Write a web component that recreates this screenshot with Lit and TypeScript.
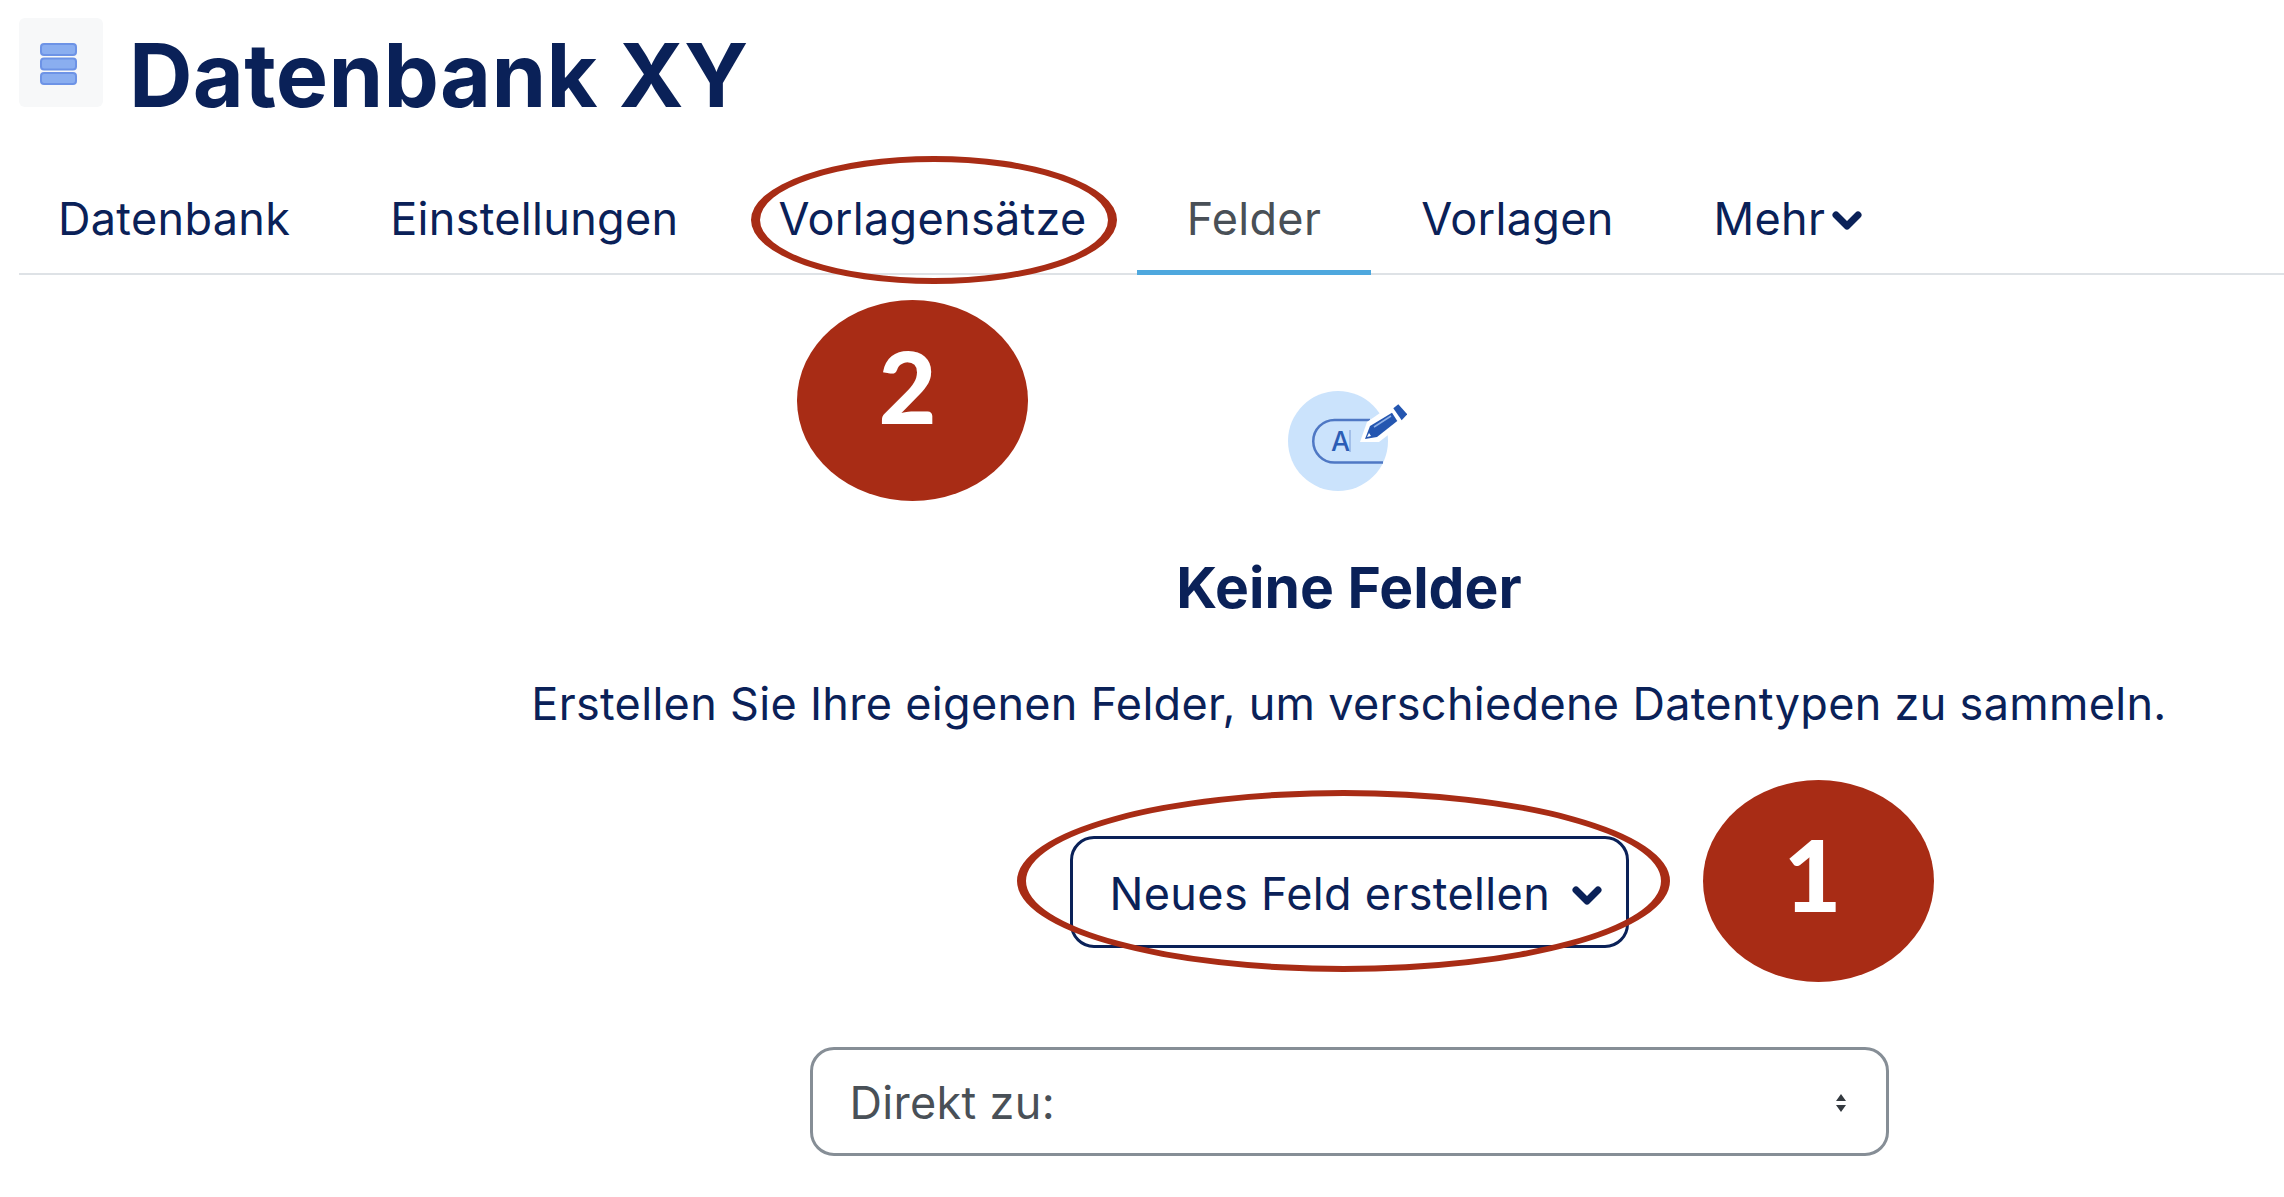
import { LitElement, html, css } from 'lit';
import { customElement } from 'lit/decorators.js';

const chevron = html`<svg class="chev" viewBox="0 0 30 22"><path d="M4 5 L15 16 L26 5" fill="none" stroke="currentColor" stroke-width="7" stroke-linecap="round" stroke-linejoin="round"/></svg>`;

@customElement('app-root')
export class AppRoot extends LitElement {
  static styles = css`
    :host {
      display: block;
      position: relative;
      width: 2284px;
      height: 1197px;
      overflow: hidden;
      background: #fff;
      color: #0a2158;
      font-family: Inter, "Liberation Sans", sans-serif;
    }

    .head {
      display: flex;
      gap: 26px;
      padding: 18px 0 0 19px;
      height: 89px;
    }

    .db-box {
      width: 84px;
      height: 89px;
      flex: none;
      border-radius: 6px;
      background: #f7f8f9;
      display: flex;
      justify-content: center;
      padding-top: 25px;
      box-sizing: border-box;
      padding-right: 6px;
    }

    .db-box svg {
      width: 37px;
      height: 42px;
    }

    .title {
      margin: 13px 0 0;
      font-size: 88px;
      line-height: 89px;
      font-weight: 700;
      letter-spacing: 0.25px;
      white-space: nowrap;
    }

    .tabs {
      display: flex;
      margin: 72px 0 0 19px;
      height: 94px;
      border-bottom: 2px solid #dee2e6;
      font-size: 45px;
      letter-spacing: 0.31px;
    }

    .tab {
      position: relative;
      display: flex;
      align-items: center;
      gap: 7px;
      padding: 0 50px 16px;
      line-height: 53px;
      white-space: nowrap;
    }

    .tab:first-child {
      padding-left: 39px;
    }

    .tab.active {
      color: #495057;
    }

    .tab.active::after {
      content: "";
      position: absolute;
      left: 0;
      right: 0;
      bottom: -2px;
      height: 5px;
      background: #4ea8de;
    }

    .chev {
      width: 30px;
      height: 22px;
      margin-top: 6px;
    }

    .empty {
      display: flex;
      flex-direction: column;
      align-items: center;
      padding: 115px 0 0 414px;
    }

    .field-icon {
      width: 120px;
      height: 102px;
      margin-right: 4px;
    }

    .empty h2 {
      margin: 62px 0 0;
      font-size: 57px;
      line-height: 68px;
      font-weight: 700;
    }

    .empty p {
      margin: 55px 0 0;
      font-size: 45px;
      letter-spacing: 0.31px;
      line-height: 53px;
      white-space: nowrap;
    }

    .add-btn {
      display: flex;
      align-items: center;
      gap: 22px;
      box-sizing: border-box;
      width: 559px;
      height: 112px;
      margin-top: 106px;
      padding: 2px 22px 0 37px;
      border: 3px solid #0a2158;
      border-radius: 24px;
      font-size: 45px;
      letter-spacing: 0.35px;
      white-space: nowrap;
    }

    .jump {
      display: flex;
      align-items: center;
      justify-content: space-between;
      box-sizing: border-box;
      width: 1079px;
      height: 109px;
      margin-top: 99px;
      padding: 2px 37px 0;
      border: 3px solid #868e96;
      border-radius: 24px;
      color: #495057;
      font-size: 45px;
      letter-spacing: 0.31px;
    }

    .jump svg {
      width: 16px;
      height: 20px;
    }

    .ring {
      position: absolute;
      box-sizing: border-box;
      border: 6px solid #a82c15;
      border-left-width: 9px;
      border-right-width: 9px;
      border-radius: 50%;
    }

    .ring.r-tab {
      left: 751px;
      top: 156px;
      width: 366px;
      height: 128px;
    }

    .ring.r-btn {
      left: 1017px;
      top: 790px;
      width: 653px;
      height: 182px;
    }

    .badge {
      position: absolute;
      display: flex;
      align-items: center;
      justify-content: center;
      box-sizing: border-box;
      background: #a82c15;
      border-radius: 50%;
      color: #fff;
      font-family: Lato, "Noto Sans", sans-serif;
      font-weight: 900;
      font-size: 100px;
      width: 231px;
      height: 202px;
    }

    .badge.b1 {
      left: 1703px;
      top: 780px;
      padding: 0 12px 16px 0;
    }

    .badge.b2 {
      left: 797px;
      top: 300px;
      height: 201px;
      padding: 0 10px 32px 0;
    }
  `;

  render() {
    return html`
      <div class="head">
        <div class="db-box">
          <svg viewBox="0 0 37 42">
            <g fill="#8aaef0" stroke="#6d93e6" stroke-width="2">
              <rect x="1" y="1" width="35" height="11" rx="3"></rect>
              <rect x="1" y="15.5" width="35" height="11" rx="3"></rect>
              <rect x="1" y="30" width="35" height="11" rx="3"></rect>
            </g>
          </svg>
        </div>
        <h1 class="title">Datenbank XY</h1>
      </div>
      <nav class="tabs">
        <div class="tab">Datenbank</div>
        <div class="tab">Einstellungen</div>
        <div class="tab">Vorlagensätze</div>
        <div class="tab active">Felder</div>
        <div class="tab">Vorlagen</div>
        <div class="tab">Mehr ${chevron}</div>
      </nav>
      <main class="empty">
        <svg class="field-icon" viewBox="0 0 120 102">
          <circle cx="51" cy="51" r="50" fill="#cbe3fc"></circle>
          <path d="M83 30 H47.500 a21.250 21.250 0 0 0 0 42.500 H96" fill="none" stroke="#4f78c4" stroke-width="2.500"></path>
          <text x="44" y="61" font-family="Inter, sans-serif" font-size="27" font-weight="500" fill="#2b5db5">A</text>
          <path d="M63 40 V62" stroke="#7b9bd6" stroke-width="1"></path>
          <path d="M73 52 L80 32 L106 14 L118 32 L92 52 Z" fill="#fff"></path>
          <path d="M78 49 L83 36 L105 22.700 L110.300 31 L90 47 Z" fill="#2456b0"></path>
          <path d="M106.300 18.300 L111.300 14.300 L120.300 24.300 L114.700 30.300 Z" fill="#2456b0"></path>
          <path d="M87 37 L104 26" stroke="#8fb0e6" stroke-width="1.500"></path>
          <path d="M80 47 L82 43 L84 46 Z" fill="#fff"></path>
        </svg>
        <h2>Keine Felder</h2>
        <p>Erstellen Sie Ihre eigenen Felder, um verschiedene Datentypen zu sammeln.</p>
        <div class="add-btn">Neues Feld erstellen ${chevron}</div>
        <div class="jump">
          Direkt zu:
          <svg viewBox="0 0 16 20"><path d="M8 1 L13 8 H3 Z M3 12 H13 L8 19 Z" fill="#343a40"></path></svg>
        </div>
      </main>
      <div class="ring r-tab"></div>
      <div class="ring r-btn"></div>
      <div class="badge b1">1</div>
      <div class="badge b2">2</div>
    `;
  }
}
